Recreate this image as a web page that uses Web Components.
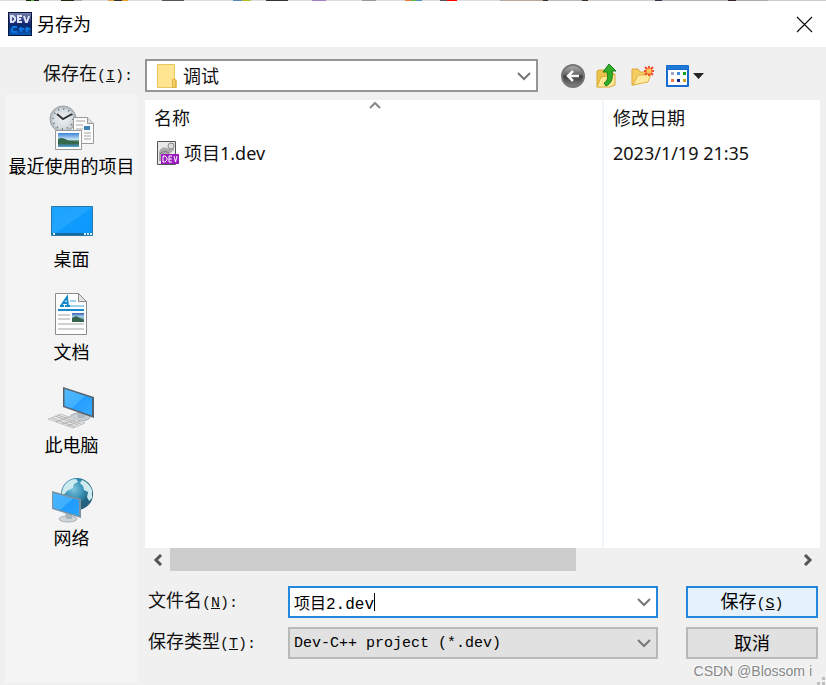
<!DOCTYPE html>
<html lang="zh-CN">
<head>
<meta charset="utf-8">
<title>另存为</title>
<style>
    body {
        margin: 0;
        background: #f0f0f0;
        --ui: "Noto Sans", "Noto Sans CJK SC", sans-serif;
        --mono: "Liberation Mono", "Noto Sans CJK SC", monospace;
        font: 18px/24px var(--ui);
        color: #111;
    }
</style>
</head>
<body>
<save-dialog></save-dialog>

<script>
// fixed width label: chinese text big, latin text small, access key underlined
function labelText(text, key, colon) {
    return `${text}<span class="lat">(<u>${key}</u>)${colon ? ":" : ""}</span>`;
}

const chevron = `<svg class="chev" width="16" height="16" viewBox="0 0 16 16" aria-hidden="true"><path d="M2 5l6 6 6-6" fill="none" stroke="#777" stroke-width="2"/></svg>`;

// shared look of the labels and combo boxes
const fieldStyle = `
    * { box-sizing: border-box; }
    label { padding-top: 2px; font-family: var(--mono); white-space: nowrap; }
    .lat { font-size: 15px; }
    .box { display: grid; height: 32px; border: 2px solid #b9b9b9; background: #e1e1e1; align-items: center; min-width: 0; }
    .box > * { grid-area: 1 / 1; }
    select, input { appearance: none; border: 0; margin: 0; background: none; color: inherit; outline: none; height: 28px; border-radius: 0; }
    select { width: 100%; padding: 0 28px 0 4px; }
    .chev { justify-self: end; margin-right: 4px; pointer-events: none; }
`;

const placeIcons = {
    recent: `
        <defs>
            <radialGradient id="c"><stop offset="0" stop-color="#eef2f4"/><stop offset=".75" stop-color="#d3dade"/><stop offset="1" stop-color="#aab2b8"/></radialGradient>
            <linearGradient id="p" x2="0" y2="1"><stop offset="0" stop-color="#3a83d8"/><stop offset=".5" stop-color="#cfe8f6"/><stop offset=".55" stop-color="#4f7a55"/><stop offset=".75" stop-color="#336a70"/><stop offset="1" stop-color="#5ba0cc"/></linearGradient>
        </defs>
        <circle cx="15" cy="16" r="13" fill="url(#c)" stroke="#9aa1a6"/>
        <circle cx="15" cy="16" r="10" fill="none" stroke="#6d7479" stroke-width="2" stroke-dasharray="1 4.24"/>
        <path d="M9 11l6 5 9-5" fill="none" stroke="#333" stroke-width="2"/>
        <path d="M25.500 14.500h14l6 6v20h-20z" fill="#fbfbfb" stroke="#999"/>
        <path d="M39.500 14.500v6h6" fill="#ddd" stroke="#999"/>
        <path d="M28 18h9M28 22h7M28 26h7M36 30h7M36 33h7M36 36h7" stroke="#a5a5a5"/>
        <path d="M36 23h6v4h-6z" fill="#3e83b4"/>
        <path d="M7.500 27.500h26v19h-26z" fill="#fff" stroke="#999"/>
        <path d="M10 30h21v14h-21z" fill="url(#p)"/>
        <path d="M10 36c5-3 8 1 12 2s6 1 9 1v2H10z" fill="#36684e"/>`,
    desktop: `
        <defs><linearGradient id="d" x2="1" y2="1"><stop offset="0" stop-color="#18a2ff"/><stop offset=".5" stop-color="#22a5ff"/><stop offset=".51" stop-color="#109bff"/><stop offset="1" stop-color="#0b96f8"/></linearGradient></defs>
        <path d="M3.500 10.500h41v29h-41z" fill="url(#d)" stroke="#2978a8"/>
        <path d="M4 37h40v2H4z" fill="#1469a3"/>
        <path d="M5 37h2v2H5zM36 37h2v2h-2zM39 37h2v2h-2zM42 37h2v2h-2z" fill="#d7efff"/>`,
    documents: `
        <defs><linearGradient id="q" x2="0" y2="1"><stop offset="0" stop-color="#315fb0"/><stop offset=".4" stop-color="#a5d0ea"/><stop offset="1" stop-color="#2e6a68"/></linearGradient></defs>
        <path d="M7.500 4.500h23l8 8v33h-31z" fill="#fdfdfd" stroke="#8b8b8b"/>
        <path d="M30.500 4.500v8h8z" fill="#e3e3e3" stroke="#8b8b8b"/>
        <path d="M12 17h4M17 17h5M13 17l6-9 1 9M15 14h5" fill="none" stroke="#168bc9" stroke-width="2"/>
        <path d="M22 12h6M22 17h14" stroke="#40a7dc"/>
        <path d="M10 21h26" stroke="#168bd0" stroke-width="2"/>
        <path d="M10 26h12M10 30h12M10 35h26M10 40h26" stroke="#a5a5a5"/>
        <path d="M24 24h12v9H24z" fill="url(#q)"/><path d="M24 29l4-2 8 4v2H24z" fill="#34644d"/>`,
    computer: `
        <defs><linearGradient id="m" x2="1" y2="1"><stop offset="0" stop-color="#55baff"/><stop offset=".5" stop-color="#3eafff"/><stop offset=".51" stop-color="#249fff"/><stop offset="1" stop-color="#36aaff"/></linearGradient></defs>
        <ellipse cx="32" cy="35" rx="10" ry="4" fill="#c9d0d5" stroke="#a2abb1"/>
        <path d="M29 28l8 3v5h-7z" fill="#aeb9c1"/>
        <path d="M15 5l31 10v21L15 25z" fill="#56636e"/>
        <path d="M16.500 7l27.500 9v17.500L16.500 24z" fill="url(#m)"/>
        <path d="M0 37l13-5 24 9-12 5z" fill="#e4e4e4" stroke="#c4c4c4"/>
        <path d="M4 36l23 9M7 34l23 9M10 33l23 9M8 40l13-5M14 42l13-4M20 44l12-5" stroke="#b5b5b5" stroke-width="1"/>`,
    network: `
        <defs>
            <radialGradient id="g" cx=".4" cy=".35"><stop offset="0" stop-color="#7cc5df"/><stop offset=".6" stop-color="#3890b6"/><stop offset="1" stop-color="#23627f"/></radialGradient>
            <linearGradient id="n" x2="1" y2="1"><stop offset="0" stop-color="#4bb4ff"/><stop offset=".5" stop-color="#3eafff"/><stop offset=".51" stop-color="#1d9bff"/><stop offset="1" stop-color="#2ca5ff"/></linearGradient>
        </defs>
        <circle cx="29" cy="19" r="16" fill="url(#g)"/>
        <path d="M15 13c3-6 8-9 13-9l2 3-4 2-1 4-6 3-4 5-2-1zM34 5c5 2 8 5 10 10v8l-3 3-2-4 1-5-4-2-1-4-3-3z" fill="#cdebee"/>
        <ellipse cx="20" cy="44" rx="9" ry="3" fill="#d0d6da" stroke="#aab1b6"/>
        <path d="M17 38l7 2v4h-6z" fill="#a8b4bc"/>
        <path d="M4 16l29 8v19L4 34z" fill="#7d909c"/>
        <path d="M5 18l26 7v16L5 33z" fill="url(#n)"/>`
};

class PlaceItem extends HTMLElement {
    constructor() {
        super();
        this.attachShadow({mode: "open"});
    }
    connectedCallback() {
        this.shadowRoot.innerHTML = `
<style>
    :host { display: block; }
    button { display: flex; flex-direction: column; align-items: center; gap: 3px; width: 100%; padding: 8px 0 10px; border: 0; background: none; color: #000; font: inherit; white-space: nowrap; }
    svg { display: block; width: 48px; height: 48px; }
</style>
<button type="button">
    <svg viewBox="0 0 48 48" aria-hidden="true">${placeIcons[this.getAttribute("icon")]}</svg>
    <span><slot></slot></span>
</button>`;
    }
}
customElements.define("place-item", PlaceItem);

class TitleBar extends HTMLElement {
    constructor() {
        super();
        this.attachShadow({mode: "open"}).innerHTML = `
<style>
    :host { display: flex; align-items: center; gap: 5px; height: 46px; padding: 0 13px 0 8px; background: #fff; color: #000; }
    svg { display: block; }
    span { flex: 1; }
    button { padding: 0; border: 0; background: none; }
</style>
<svg width="24" height="24" viewBox="0 0 24 24" aria-hidden="true">
    <defs><linearGradient id="t" x2="0" y2="1"><stop offset="0" stop-color="#7680ae"/><stop offset=".4" stop-color="#23317c"/><stop offset=".55" stop-color="#08286c"/><stop offset="1" stop-color="#0659b8"/></linearGradient></defs>
    <path d="M0 0h24v24H0z" fill="#07163f"/>
    <path d="M1 1h22v22H1z" fill="url(#t)"/>
    <path d="M3 4v6h2l2-2V6L5 4zM14 4h-4v6h4M10 7h3M16 4l2 6h1l2-6" fill="none" stroke="#dfe4f6" stroke-width="2"/>
    <path d="M9 15H5l-1 2v2l1 1h4M11 17h5M13 15v5M17 17h5M19 15v5" fill="none" stroke="#0f74dc" stroke-width="2"/>
</svg>
<span><slot></slot></span>
<button type="button" aria-label="关闭"><svg width="17" height="17" viewBox="0 0 17 17"><path d="M1 1l15 15M16 1L1 16" stroke="#111" stroke-width="1.2"/></svg></button>`;
    }
}
customElements.define("title-bar", TitleBar);

// "save in" drop-down with the navigation buttons after it
class LookIn extends HTMLElement {
    constructor() {
        super();
        this.attachShadow({mode: "open"}).innerHTML = `
<style>
    ${fieldStyle}
    :host { display: grid; grid-template-columns: 128px minmax(0, 1fr) 270px; column-gap: 12px; padding: 12px 6px 0 5px; align-items: center; }
    label { padding: 0; text-align: right; }
    .box { height: 33px; border: 2px solid #959595; background: #fff; }
    select { padding-left: 36px; font: 18px var(--ui); }
    .folder { margin-left: 9px; pointer-events: none; }
    .tools { display: flex; align-items: center; gap: 10px; padding-left: 10px; }
    .tools button { display: flex; padding: 0; border: 0; background: none; }
</style>
<label for="dir">${labelText("保存在", "I", true)}</label>
<div class="box">
    <select id="dir"><option>调试</option></select>
    <svg class="folder" width="22" height="26" viewBox="0 0 22 26" aria-hidden="true">
        <path d="M1.500 1.500h17v14l2 2v7h-19z" fill="#ffe592" stroke="#e8c55d"/>
        <path d="M16.500 24.500v-8l2-1 1 2v7z" fill="#f6cf63" stroke="#dfb445"/>
    </svg>
    ${chevron}
</div>
<div class="tools">
    <button type="button" aria-label="后退"><svg width="26" height="26" viewBox="0 0 26 26">
        <defs><linearGradient id="b" x2="0" y2="1"><stop offset="0" stop-color="#b3b3b3"/><stop offset=".45" stop-color="#666"/><stop offset=".5" stop-color="#3c3c3c"/><stop offset="1" stop-color="#858585"/></linearGradient></defs>
        <circle cx="13" cy="13" r="11" fill="url(#b)" stroke="#777" stroke-width="2"/>
        <path d="M19 13H8M13 8l-5 5 5 5" fill="none" stroke="#f4f4f4" stroke-width="2.500"/>
    </svg></button>
    <button type="button" aria-label="向上一级"><svg width="24" height="26" viewBox="0 0 24 26">
        <path d="M1 24V8l2-1h5l2 2h6l2 2v11z" fill="#edc34d" stroke="#d7a938"/>
        <path d="M1 24l4-10 6-1 8-2v11l-5 2z" fill="#ffe694" stroke="#d9ac39"/>
        <path d="M8 20c4-2 4-6 3-11H7l6-8 7 7h-4c1 7 0 12-6 15z" fill="#31ad27" stroke="#178019"/>
    </svg></button>
    <button type="button" aria-label="新建文件夹"><svg width="25" height="26" viewBox="0 0 25 26">
        <path d="M2 22V6h6l2 3h7v4L4 22z" fill="#f6cd62" stroke="#dca936"/>
        <path d="M3 22l5-10h5l2-1h6l-3 8z" fill="#ffe99c" stroke="#e1b042"/>
        <circle cx="19" cy="8" r="3" fill="#ffc65c"/>
        <path d="M19 3v2M19 11v2M14 8h2M22 8h2M15 4l2 2M21 10l2 2M23 4l-2 2M17 10l-2 2" stroke="#f0492b" stroke-width="2"/>
        <circle cx="19" cy="8" r="3" fill="none" stroke="#f46a33"/>
    </svg></button>
    <button type="button" aria-label="查看"><svg width="40" height="26" viewBox="0 0 40 26">
        <rect x="1" y="2" width="23" height="22" rx="1" fill="#176bcf"/>
        <path d="M2 3h21v3H2z" fill="#1d78d6"/>
        <path d="M3 7h19v15H3z" fill="#fff"/>
        <path d="M6 9h3v3H6z" fill="#a2a2ca"/><path d="M12 9h3v3h-3z" fill="#3d8cde"/><path d="M18 9h3v3h-3z" fill="#15a01c"/>
        <path d="M6 16h3v3H6z" fill="#f5794a"/><path d="M12 16h3v3h-3z" fill="#16278e"/><path d="M18 16h3v3h-3z" fill="#c9a11c"/>
        <path d="M28 10h11l-5.500 6z" fill="#252525"/>
    </svg></button>
</div>`;
    }
}
customElements.define("look-in", LookIn);

class FileList extends HTMLElement {
    constructor() {
        super();
        this.attachShadow({mode: "open"}).innerHTML = `
<style>
    :host { display: flex; flex-direction: column; }
    .list { position: relative; flex: 1; background: linear-gradient(#f0f5fc, #f0f5fc) right 216px top / 2px 100% no-repeat #fff; }
    table { width: 100%; table-layout: fixed; border-collapse: collapse; }
    th, td { height: 35px; padding: 0 9px; font-weight: normal; text-align: left; box-sizing: border-box; }
    .date { width: 216px; }
    .sort { position: absolute; top: 0; left: 0; width: calc(100% - 216px); text-align: center; line-height: 0; }
    .file { display: flex; align-items: center; gap: 4px; padding-left: 2px; }
    .bar { display: flex; align-items: center; height: 24px; }
    .bar button { display: flex; justify-content: center; width: 25px; padding: 0; border: 0; background: none; }
    .track { flex: 1; height: 100%; }
    .thumb { width: 65%; height: 23px; background: #cdcdcd; }
</style>
<div class="list">
    <div class="sort"><svg width="14" height="9" viewBox="0 0 14 9" aria-hidden="true"><path d="M2 8l5-5 5 5" fill="none" stroke="#888" stroke-width="2"/></svg></div>
    <table>
        <thead><tr><th>名称</th><th class="date">修改日期</th></tr></thead>
        <tbody><tr>
            <td><div class="file">
                <svg width="24" height="26" viewBox="0 0 24 26" aria-hidden="true">
                    <path d="M1.500 1.500h18v23h-18z" fill="#e8e8e8" stroke="#555"/>
                    <path d="M3 14c0-6 5-8 10-5l2-6h3v7l-5 4-6 1-2 6H3z" fill="#aaa"/>
                    <circle cx="15" cy="6" r="3" fill="#ddd" stroke="#888"/>
                    <path d="M4 14c3-3 6-3 9-1" fill="none" stroke="#777"/>
                    <path d="M5 14h18v10H5z" fill="#9a1cc0"/>
                    <path d="M7 16v6h2l2-2v-2l-2-2zM16 16h-3v6h3M13 19h3M18 16l1.500 6L21 16" fill="none" stroke="#fff"/>
                </svg><span>项目1.dev</span></div></td>
            <td>2023/1/19 21:35</td>
        </tr></tbody>
    </table>
</div>
<div class="bar">
    <button type="button" aria-label="向左滚动"><svg width="12" height="12" viewBox="0 0 12 12"><path d="M9 1L4 6l5 5" fill="none" stroke="#555" stroke-width="3"/></svg></button>
    <div class="track"><div class="thumb"></div></div>
    <button type="button" aria-label="向右滚动"><svg width="12" height="12" viewBox="0 0 12 12"><path d="M3 1l5 5-5 5" fill="none" stroke="#555" stroke-width="3"/></svg></button>
</div>`;
    }
}
customElements.define("file-list", FileList);

class NameField extends HTMLElement {
    constructor() {
        super();
        this.attachShadow({mode: "open"}).innerHTML = `
<style>
    ${fieldStyle}
    :host { display: grid; grid-template-columns: 140px minmax(0, 1fr); align-items: center; }
    .box { border-color: #2488dc; background: #fff; }
    .edit { display: flex; align-items: center; padding-left: 4px; min-width: 0; }
    input { field-sizing: content; padding: 0; font: 16px var(--mono); color: #000; caret-color: transparent; }
    .caret { width: 1px; height: 18px; background: #000; }
</style>
<label for="name">${labelText("文件名", "N", true)}</label>
<div class="box">
    <div class="edit"><input id="name" type="text" value="项目2.dev"><span class="caret"></span></div>
    ${chevron}
</div>`;
    }
}
customElements.define("name-field", NameField);

class TypeField extends HTMLElement {
    constructor() {
        super();
        this.attachShadow({mode: "open"}).innerHTML = `
<style>
    ${fieldStyle}
    :host { display: grid; grid-template-columns: 140px minmax(0, 1fr); align-items: center; }
    select { font: 15px var(--mono); color: #000; }
</style>
<label for="type">${labelText("保存类型", "T", true)}</label>
<div class="box">
    <select id="type"><option>Dev-C++ project (*.dev)</option></select>
    ${chevron}
</div>`;
    }
}
customElements.define("type-field", TypeField);

class DialogButton extends HTMLElement {
    constructor() {
        super();
        this.attachShadow({mode: "open"}).innerHTML = `
<style>
    :host { display: block; }
    button { width: 100%; height: 32px; padding: 3px 0 0; border: 2px solid #b9b9b9; background: #e1e1e1; color: #000; font: 18px/24px var(--mono); }
    :host([primary]) button { border-color: #2488dc; background: #e5f1fb; }
    ::slotted(span) { font-size: 15px; }
</style>
<button type="button"><slot></slot></button>`;
    }
}
customElements.define("dialog-button", DialogButton);

class SaveDialog extends HTMLElement {
    constructor() {
        super();
        this.attachShadow({mode: "open"}).innerHTML = `
<style>
    :host { position: relative; display: flex; flex-direction: column; min-height: 100vh; }
    /* sliver of the window behind */
    .behind { height: 1px; background: linear-gradient(90deg, #ddd 26px, #172b0b 26px 31px, #4bc332 31px 34px, #222 34px 39px, #ddd 39px 61px, #1d2b0b 61px 74px, #aaa 74px 82px, #ddd 82px 108px, #e9a03a 108px 114px, #333 114px 122px, #ef9e20 122px 128px, #ddd 128px 162px, #555 162px 184px, #ddd 184px 233px, #5785bd 233px 242px, #b7bd28 242px 251px, #ddd 251px 266px, #333 266px 288px, #ddd 288px 312px, #a080c8 312px 326px, #ddd 326px 362px, #999 362px 376px, #ddd 376px 405px, #e67b3b 405px 411px, #56b94b 411px 416px, #4d94d1 416px 422px, #ddd 422px 440px, #555 440px 447px, #f00 447px 457px, #ddd 457px 500px, #b8a99f 500px 543px, #333 543px 548px, #bbb 548px 582px, #432 582px 588px, #ccc 588px 655px, #334 655px 662px, #b9b0b8 662px 728px, #322 728px 736px, #b0a8b0 736px 768px, #ccc 768px); }
    .body { flex: 1; display: grid; grid-template-columns: 133px minmax(0, 1fr); column-gap: 7px; padding: 3px 6px 2px 5px; }
    .places { background: #f4f4f4; }
    .main { display: flex; flex-direction: column; padding-top: 5px; }
    file-list { flex: 1; }
    .form { display: grid; grid-template-columns: minmax(0, 1fr) 132px; gap: 9px 28px; align-items: center; padding: 14px 2px 24px 3px; }
    .mark { position: absolute; right: 14px; bottom: 4px; font: 14px/20px "Liberation Sans", sans-serif; color: #888; text-shadow: -1px -1px #fff; }
    .grip { position: absolute; right: 0; bottom: 0; }
</style>
<div class="behind"></div>
<title-bar>另存为</title-bar>
<look-in></look-in>
<div class="body">
    <nav class="places">
        <place-item icon="recent">最近使用的项目</place-item>
        <place-item icon="desktop">桌面</place-item>
        <place-item icon="documents">文档</place-item>
        <place-item icon="computer">此电脑</place-item>
        <place-item icon="network">网络</place-item>
    </nav>
    <div class="main">
        <file-list></file-list>
        <div class="form">
            <name-field></name-field>
            <dialog-button primary>保存<span>(<u>S</u>)</span></dialog-button>
            <type-field></type-field>
            <dialog-button>取消</dialog-button>
        </div>
    </div>
</div>
<div class="mark">CSDN @Blossom i</div>
<svg class="grip" width="9" height="8" viewBox="0 0 9 8" aria-hidden="true"><path d="M5 0h3v3H5zM0 5h3v3H0zM5 5h3v3H5z" fill="#bfbfbf"/></svg>`;
    }
}
customElements.define("save-dialog", SaveDialog);
</script>
</body>
</html>
